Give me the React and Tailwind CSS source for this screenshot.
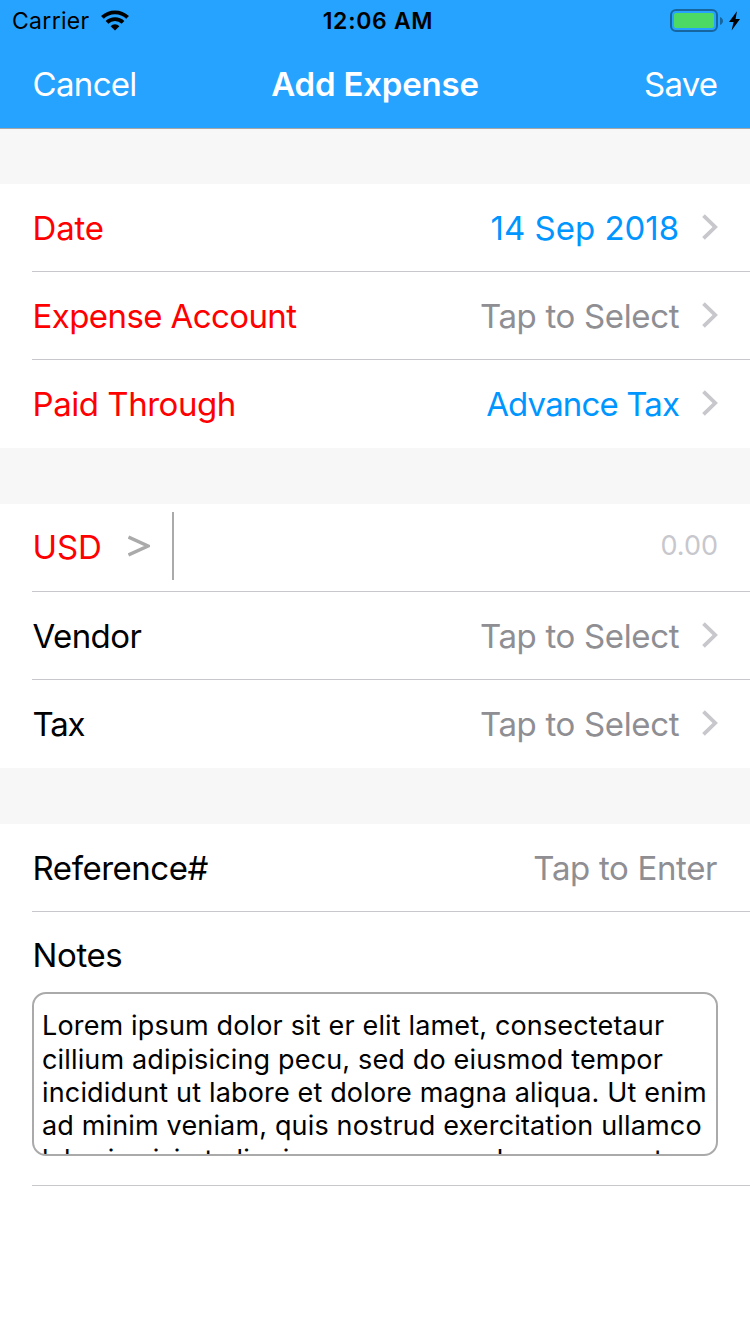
function Wifi() {
  return (
    <svg width="28" height="21" viewBox="0 0 28 21" fill="none" stroke="#000" strokeWidth="3.9">
      <path d="M1.4 7.4 A18.2 18.2 0 0 1 26.6 7.4" />
      <path d="M6 12.3 A11.6 11.6 0 0 1 22 12.3" />
      <path d="M14 20.4 L9.6 16.2 A6.2 6.2 0 0 1 18.4 16.2 Z" fill="#000" stroke="none" />
    </svg>
  );
}

function Battery() {
  return (
    <div className="flex items-center">
      <div className="h-[23px] w-12 rounded-[6px] border-2 border-[#17659f] p-[2px]">
        <div className="h-full w-full rounded-[2px] bg-[#4cd964]" />
      </div>
      <svg className="ml-[2px]" width="3" height="8" viewBox="0 0 3 8">
        <path d="M0 0 C4 1.5 4 6.5 0 8 Z" fill="#17659f" />
      </svg>
      <svg className="ml-[6px]" width="11" height="20" viewBox="0 0 11 20">
        <path d="M7.9 0.3 L0 11 L4.6 11 L2.6 19.6 L11 8 L6.6 8 Z" fill="#000" />
      </svg>
    </div>
  );
}

function Chevron() {
  return (
    <svg className="mb-[2px] ml-[22px]" width="16" height="26" viewBox="0 0 16 26" fill="none" stroke="#c7c7cc" strokeWidth="3.8">
      <path d="M1.5 1.6 L13.2 13 L1.5 24.4" />
    </svg>
  );
}

function Row({ label, value, last, chevron = true, labelClass = "", valueClass = "text-[#8e8e93] tracking-[-0.34px]" }) {
  return (
    <div className="bg-white pl-8">
      <div className={`flex h-[88px] items-center pr-8 ${last ? "" : "border-b border-[#c8c7cc]"}`}>
        <span className={`flex-1 whitespace-nowrap pl-[0.6px] pt-[2px] ${labelClass}`}>{label}</span>
        <span className={`whitespace-nowrap pr-[0.8px] pt-[2px] ${valueClass}`}>{value}</span>
        {chevron && <Chevron />}
      </div>
    </div>
  );
}

const notes = [
  "Lorem ipsum dolor sit er elit lamet, consectetaur",
  "cillium adipisicing pecu, sed do eiusmod tempor",
  "incididunt ut labore et dolore magna aliqua. Ut enim",
  "ad minim veniam, quis nostrud exercitation ullamco",
  "laboris nisi ut aliquip ex ea commodo consequat.",
];

export default function App() {
  return (
    <div className="h-[1334px] w-[750px] overflow-hidden bg-white font-['Inter',sans-serif] text-[33px] text-black">
      <header className="h-[129px] border-b border-[#a7a7aa] bg-[#25a3ff]">
        <div className="grid h-10 grid-cols-3 items-center pl-3 pr-[10px] pt-[1px] text-[23px]">
          <div className="flex items-center gap-[11.5px]">
            <span className="pt-[1px] tracking-[0.3px]">Carrier</span>
            <Wifi />
          </div>
          <div className="pl-[4px] pt-[1px] text-center font-semibold tracking-[0.7px]">12:06 AM</div>
          <div className="flex justify-end"><Battery /></div>
        </div>
        <div className="grid h-[88px] grid-cols-3 items-center px-8 pt-[2px] text-white">
          <div className="pl-[0.6px] tracking-[-0.7px]">Cancel</div>
          <div className="whitespace-nowrap text-center font-semibold tracking-[-0.2px]">Add Expense</div>
          <div className="pr-[0.8px] text-right tracking-[-0.8px]">Save</div>
        </div>
      </header>
      <div className="h-[55px] bg-[#f7f7f7]" />
      <Row label="Date" value="14 Sep 2018" labelClass="text-[#ff0000] tracking-[-0.2px]" valueClass="text-[#0096ff]" />
      <Row label="Expense Account" value="Tap to Select" labelClass="text-[#ff0000] tracking-[-0.6px]" />
      <Row label="Paid Through" value="Advance Tax" last labelClass="text-[#ff0000] tracking-[-0.47px]" valueClass="text-[#0096ff] tracking-[-0.85px]" />
      <div className="h-14 bg-[#f7f7f7]" />
      <div className="pl-8">
        <div className="flex h-[88px] items-center border-b border-[#c8c7cc] pr-8">
          <span className="w-[69px] pl-[0.6px] tracking-[-0.2px] text-[#ff0000]">USD</span>
          <svg className="mb-[2px] ml-[27px]" width="22" height="24" viewBox="0 0 22 24" fill="none" stroke="#aaa" strokeWidth="3.4">
            <path d="M0.5 2 L20 11 L0.5 20" />
          </svg>
          <div className="mb-1 ml-[22px] h-[68px] w-[2px] bg-[#aaa]" />
          <span className="mb-[2px] ml-auto text-[27px] text-[#c7c7cd]">0.00</span>
        </div>
      </div>
      <Row label="Vendor" value="Tap to Select" labelClass="tracking-[-0.6px]" />
      <Row label="Tax" value="Tap to Select" last labelClass="tracking-[-1.3px]" />
      <div className="h-14 bg-[#f7f7f7]" />
      <Row label="Reference#" value="Tap to Enter" chevron={false} labelClass="tracking-[-0.48px]" />
      <div className="pl-8">
        <div className="h-[274px] border-b border-[#c8c7cc] pr-8">
          <div className="flex h-20 items-center pl-[0.6px] pt-2 tracking-[-0.4px]">Notes</div>
          <div className="h-[164px] overflow-hidden rounded-[14px] border-2 border-[#aaa] pl-2 pt-[15.4px] text-[27px] tracking-[0.155px]">
            {notes.map((n) => (
              <div key={n} className="h-[33.3px] whitespace-nowrap leading-[33.3px]">{n}</div>
            ))}
          </div>
        </div>
      </div>
    </div>
  );
}
